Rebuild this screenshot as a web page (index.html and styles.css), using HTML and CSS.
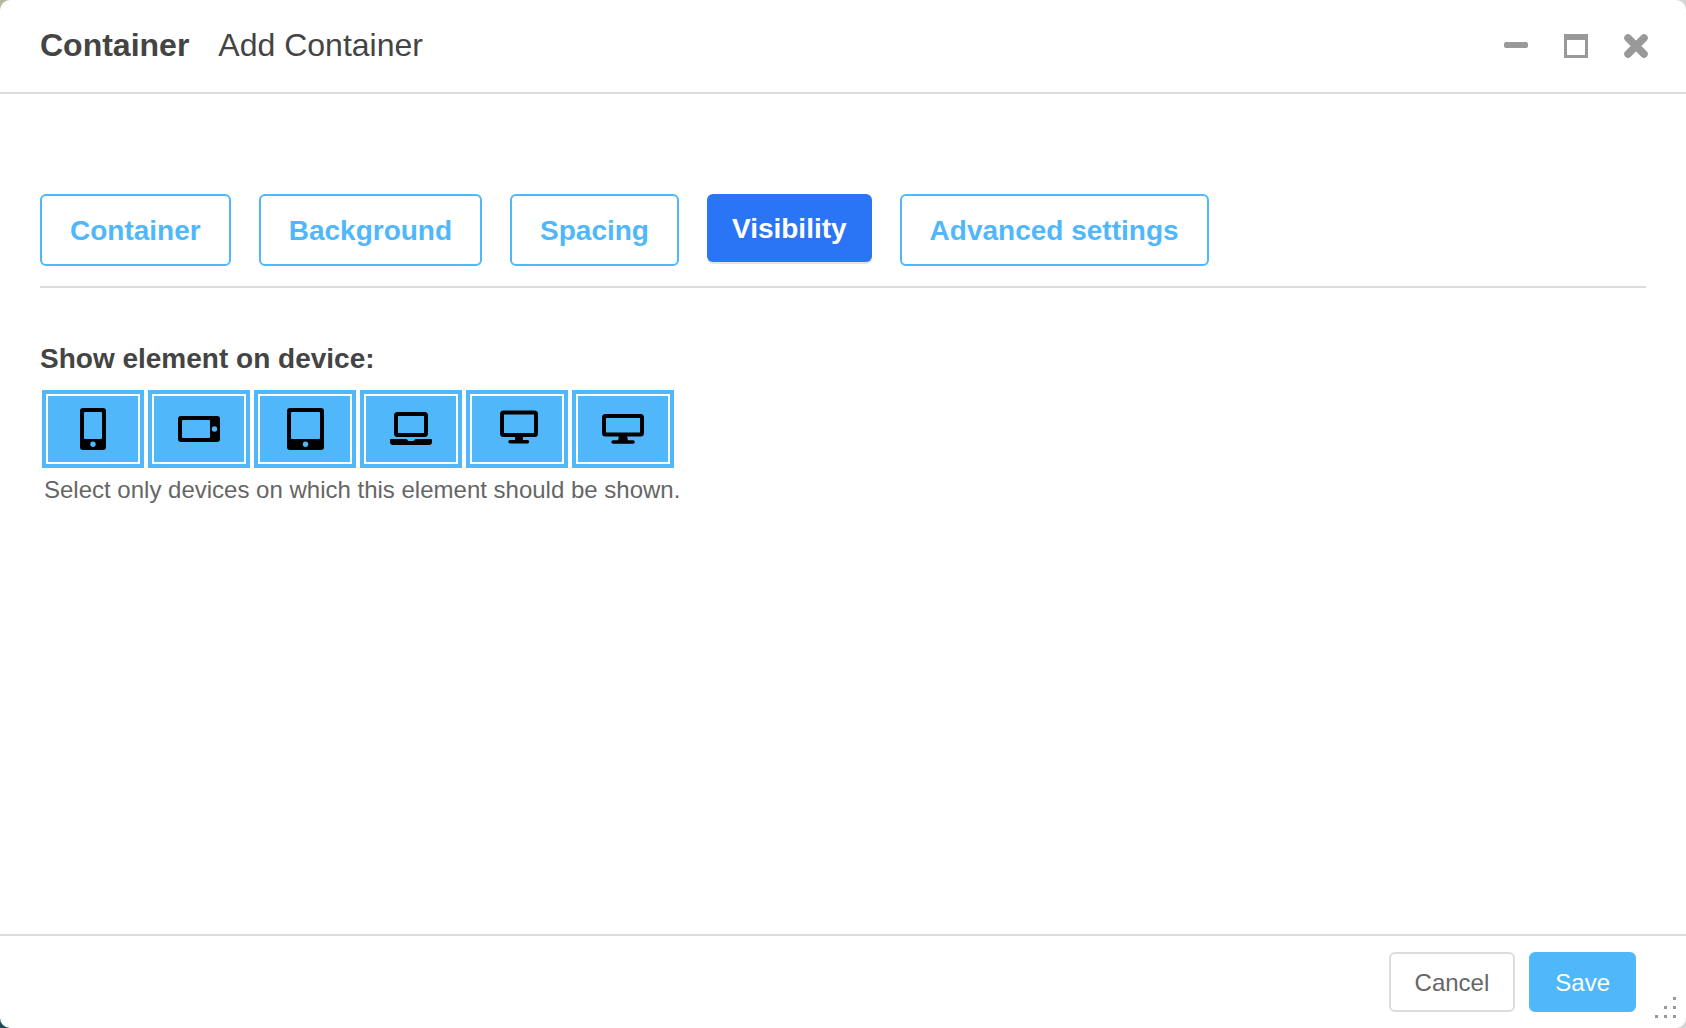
FILE: index.html
```html
<!DOCTYPE html>
<html lang="en">
<head>
<meta charset="utf-8">
<meta name="viewport" content="width=device-width, initial-scale=1">
<title>Add Container</title>
<link rel="stylesheet" href="styles.css">
</head>
<body>
<main class="dialog">
  <header class="dialog-header">
    <h1 class="dialog-title"><strong>Container</strong><span>Add Container</span></h1>
    <div class="window-controls">
      <button type="button" class="window-button" aria-label="Minimize">
        <svg viewBox="0 0 24 24"><rect y="8" width="24" height="6" rx="2"/></svg>
      </button>
      <button type="button" class="window-button" aria-label="Maximize">
        <svg viewBox="0 0 24 24"><path fill-rule="evenodd" d="M0 0H24V24H0ZM3 6V21H21V6Z"/></svg>
      </button>
      <button type="button" class="window-button" aria-label="Close">
        <svg viewBox="0 0 24 24"><path d="M4 4L20 20M20 4L4 20" fill="none" stroke="currentColor" stroke-width="7.500" stroke-linecap="round"/></svg>
      </button>
    </div>
  </header>

  <section class="dialog-body">
    <div class="tabs" role="tablist">
      <button type="button" class="tab" role="tab" aria-selected="false">Container</button>
      <button type="button" class="tab" role="tab" aria-selected="false">Background</button>
      <button type="button" class="tab" role="tab" aria-selected="false">Spacing</button>
      <button type="button" class="tab tab-active" role="tab" aria-selected="true">Visibility</button>
      <button type="button" class="tab" role="tab" aria-selected="false">Advanced settings</button>
    </div>

    <fieldset class="field">
      <legend class="field-label">Show element on device:</legend>
      <div class="devices">
        <label class="device">
          <input type="checkbox" checked aria-label="Phone, portrait">
          <svg viewBox="0 0 42 42"><path fill-rule="evenodd" d="M11 0H23Q26 0 26 3V39Q26 42 23 42H3Q0 42 0 39V3Q0 0 3 0ZM4 5V30Q4 31 5 31H21Q22 31 22 30V5Q22 4 21 4H5Q4 4 4 5ZM13 33.500A2.700 2.700 0 1 0 13 38.900A2.700 2.700 0 1 0 13 33.500Z" transform="translate(8 0)"/></svg>
        </label>
        <label class="device">
          <input type="checkbox" checked aria-label="Phone, landscape">
          <svg viewBox="0 0 42 42"><path fill-rule="evenodd" d="M3 8H39Q42 8 42 11V31Q42 34 39 34H3Q0 34 0 31V11Q0 8 3 8ZM5 12Q4 12 4 13V29Q4 30 5 30H31Q32 30 32 29V13Q32 12 31 12ZM36.500 18.300A2.700 2.700 0 1 0 36.500 23.700A2.700 2.700 0 1 0 36.500 18.300Z"/></svg>
        </label>
        <label class="device">
          <input type="checkbox" checked aria-label="Tablet">
          <svg viewBox="0 0 42 42"><path fill-rule="evenodd" d="M6 0H37Q40 0 40 3V39Q40 42 37 42H6Q3 42 3 39V3Q3 0 6 0ZM8 4Q7 4 7 5V30Q7 31 8 31H35Q36 31 36 30V5Q36 4 35 4ZM21.500 33.500A2.700 2.700 0 1 0 21.500 38.900A2.700 2.700 0 1 0 21.500 33.500Z"/></svg>
        </label>
        <label class="device">
          <input type="checkbox" checked aria-label="Laptop">
          <svg viewBox="0 0 42 42"><rect x="6" y="6" width="30" height="21" rx="1.500" fill="none" stroke="currentColor" stroke-width="4"/><path d="M1 31H16Q17 31 17.500 32Q18 33 19 33H23Q24 33 24.500 32Q25 31 26 31H41Q42 31 42 32V34Q42 37 39 37H3Q0 37 0 34V32Q0 31 1 31Z"/></svg>
        </label>
        <label class="device">
          <input type="checkbox" checked aria-label="Desktop">
          <svg viewBox="0 0 42 42"><rect x="6" y="4.500" width="34" height="22.500" rx="1.500" fill="none" stroke="currentColor" stroke-width="4"/><path d="M19 28H27V32H19Z"/><rect x="12.300" y="32" width="21" height="3.400" rx="1.700"/></svg>
        </label>
        <label class="device">
          <input type="checkbox" checked aria-label="Wide desktop">
          <svg viewBox="0 0 42 42"><rect x="2" y="8" width="38" height="18.500" rx="1.500" fill="none" stroke="currentColor" stroke-width="4"/><path d="M17 27H25L26 33H16Z"/><rect x="9.300" y="32.200" width="23.500" height="3.600" rx="1.800"/></svg>
        </label>
      </div>
      <p class="hint">Select only devices on which this element should be shown.</p>
    </fieldset>
  </section>

  <footer class="dialog-footer">
    <button type="button" class="button">Cancel</button>
    <button type="button" class="button button-primary">Save</button>
  </footer>
  <svg class="resize-grip" viewBox="0 0 21 21" aria-hidden="true"><path d="M18 0h3v3h-3zM9 9h3v3H9zM18 9h3v3h-3zM0 18h3v3H0zM9 18h3v3H9zM18 18h3v3h-3z"/></svg>
</main>
</body>
</html>
```
FILE: styles.css
```css
* {
  box-sizing: border-box;
}

body {
  margin: 0;
  background: linear-gradient(90deg, #0000 50%, #d5d5d5 50%), linear-gradient(#b7b79c 50%, #1d4a5c 50%);
  color: #444;
  font-family: "Liberation Sans", Arial, sans-serif;
}

button {
  margin: 0;
  font-family: inherit;
  cursor: pointer;
}

.dialog {
  position: relative;
  display: flex;
  flex-direction: column;
  min-height: 100vh;
  border-radius: 10px;
  background: #fff;
}

.dialog-header {
  display: flex;
  align-items: flex-end;
  justify-content: space-between;
  padding: 26px 38px 28px 40px;
  border-bottom: 2px solid #ddd;
}

.dialog-title {
  display: flex;
  gap: 29px;
  margin: 0;
  font-size: 32px;
  font-weight: 400;
  line-height: 38px;
}

.window-controls {
  display: flex;
  gap: 36px;
  padding-bottom: 6px;
}

.window-button {
  padding: 0;
  border: 0;
  background: none;
  color: #999;
}

.window-button svg {
  display: block;
  width: 24px;
  height: 24px;
  fill: currentColor;
}

.dialog-body {
  flex: 1;
  padding: 100px 40px 40px;
}

.tabs {
  display: flex;
  flex-wrap: wrap;
  align-items: flex-start;
  gap: 28px;
  padding-bottom: 20px;
  border-bottom: 2px solid #ddd;
}

.tab {
  padding: 19px 28px 17px;
  border: 2px solid #50b8fa;
  border-radius: 6px;
  background: #fff;
  color: #50b8fa;
  font-size: 28px;
  font-weight: 700;
  line-height: 32px;
}

.tab-active {
  padding-inline: 25px;
  border: 0;
  background: #2a74f6;
  box-shadow: 0 2px 0 #e4e4e8;
  color: #fff;
}

.field {
  min-width: 0;
  margin: 55px 0 0;
  padding: 0;
  border: 0;
}

.field-label {
  padding: 0;
  font-size: 28px;
  font-weight: 700;
  line-height: 32px;
}

.devices {
  display: flex;
  flex-wrap: wrap;
  gap: 4px;
  padding: 15px 2px 0;
}

.device {
  display: grid;
  place-items: center;
  width: 102px;
  height: 78px;
  cursor: pointer;
}

.device input,
.device svg {
  grid-area: 1 / 1;
}

.device input {
  width: 100%;
  height: 100%;
  margin: 0;
  border: 4px solid #ddd;
  outline: 2px solid #fff;
  outline-offset: -6px;
  background: #ddd;
  appearance: none;
}

.device input:checked {
  border-color: #50b8fa;
  background: #50b8fa;
}

.device svg {
  width: 42px;
  height: 42px;
  color: #000;
  fill: currentColor;
  pointer-events: none;
}

.hint {
  margin: 8px 4px 0;
  color: #666;
  font-size: 24px;
  line-height: 28px;
}

.dialog-footer {
  display: flex;
  justify-content: flex-end;
  gap: 14px;
  padding: 16px 50px;
  border-top: 2px solid #ddd;
}

.button {
  padding: 15px 24px 13px;
  border: 2px solid #ddd;
  border-radius: 6px;
  background: #fff;
  color: #666;
  font-size: 24px;
  line-height: 28px;
}

.button-primary {
  border-color: #50b8fa;
  background: #50b8fa;
  color: #fff;
}

.resize-grip {
  position: absolute;
  right: 10px;
  bottom: 10px;
  width: 21px;
  height: 21px;
  fill: #999;
  cursor: nwse-resize;
}
```
